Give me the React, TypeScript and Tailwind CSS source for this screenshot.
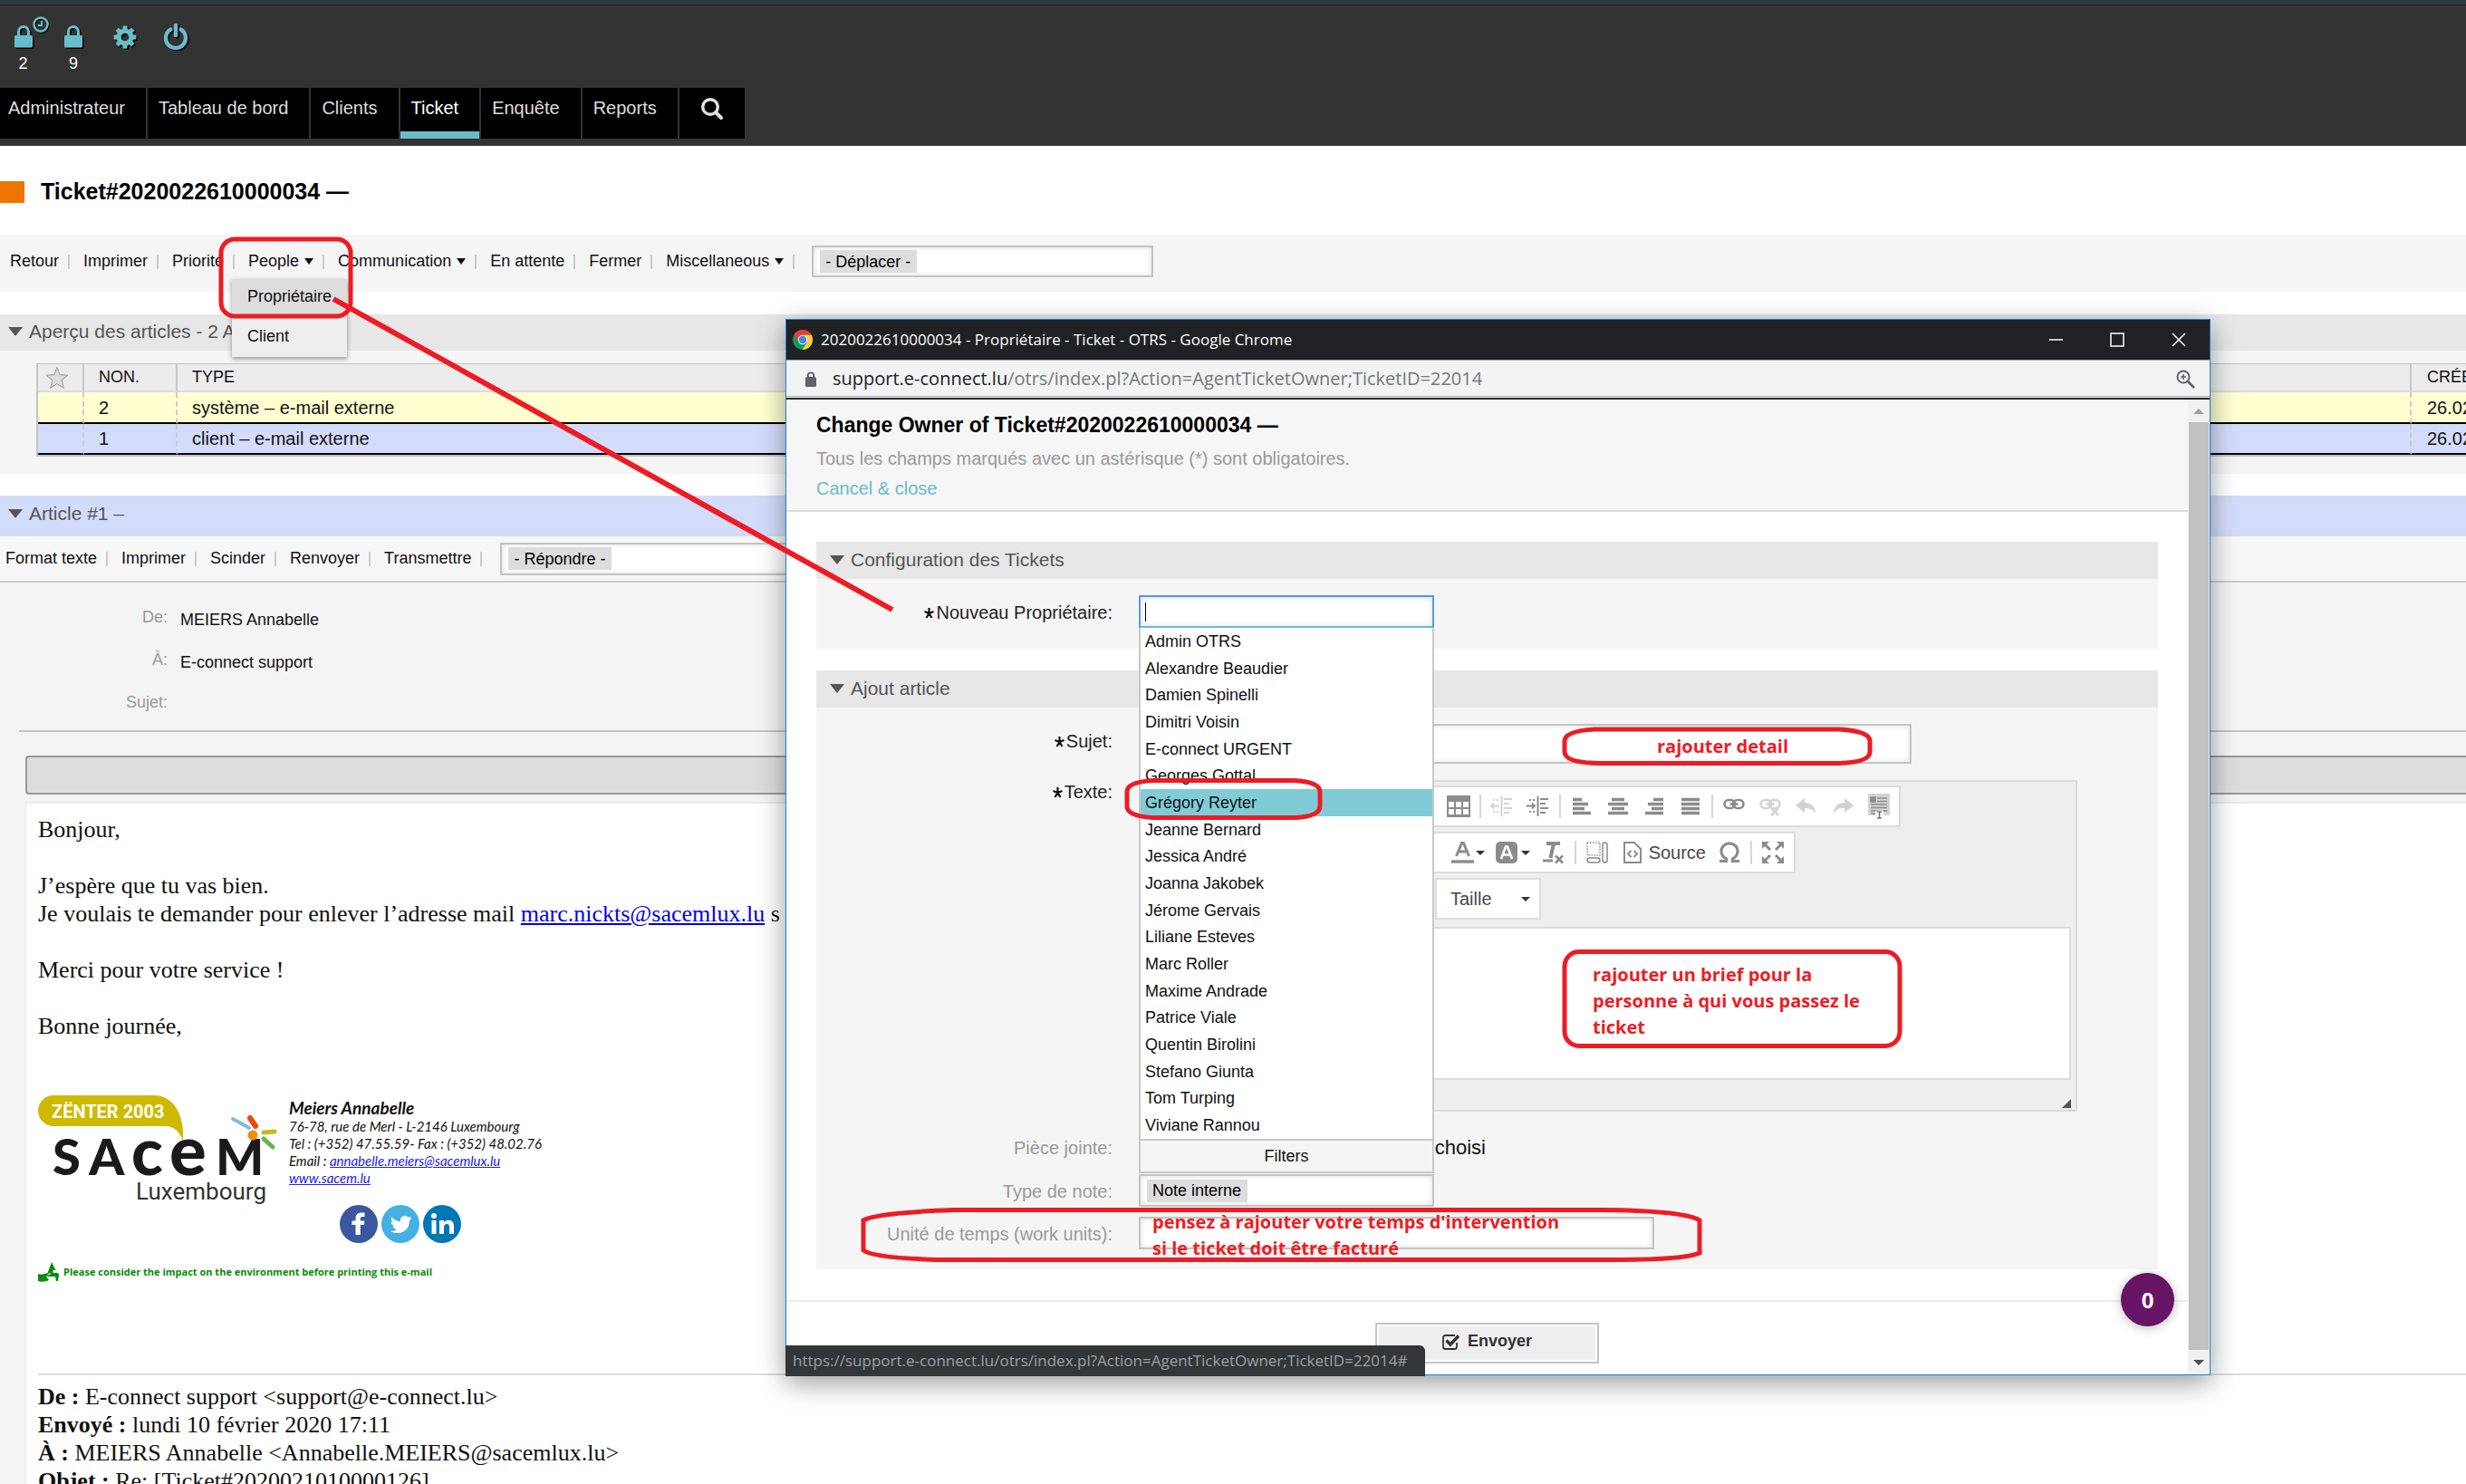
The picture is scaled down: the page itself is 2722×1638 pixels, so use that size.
import React from "react";

const ARIAL = "font-['Liberation_Sans',Arial,sans-serif]";

function LockIcon() {
  return (
    <svg width="20" height="26" viewBox="0 0 20 26" className="overflow-visible" aria-hidden="true">
      <g transform="translate(1.5 1.5)" fill="#000" stroke="#000">
        <path d="M4.5 12V7a5.5 5.5 0 0 1 11 0v5" fill="none" strokeWidth="3" />
        <rect x="0.5" y="11.5" width="19" height="12.5" rx="1" />
      </g>
      <path d="M4.5 12V7a5.5 5.5 0 0 1 11 0v5" fill="none" stroke="#69bdca" strokeWidth="3" />
      <rect y="11" width="20" height="13.5" rx="1.5" fill="#69bdca" />
    </svg>
  );
}

function ClockIcon() {
  return (
    <svg width="20" height="20" viewBox="0 0 20 20" aria-hidden="true">
      <circle cx="10" cy="10" r="7.5" fill="none" stroke="#000" strokeWidth="2.5" />
      <circle cx="9" cy="9" r="7.5" fill="none" stroke="#69bdca" strokeWidth="2.4" />
      <path d="M10 5v5H6" fill="none" stroke="#69bdca" strokeWidth="1.8" />
    </svg>
  );
}

const TEETH = [0, 45, 90, 135, 180, 225, 270, 315];

function Gear({ color }: { color: string }) {
  return (
    <g>
      {TEETH.map((a) => (
        <path key={a} d="M10 5.5 10.8 0.6h4.4L16 5.5z" fill={color} transform={"rotate(" + a + " 13 13)"} />
      ))}
      <circle cx="13" cy="13" r="6.8" fill="none" stroke={color} strokeWidth="5" />
    </g>
  );
}

function GearIcon() {
  return (
    <svg width="28" height="28" viewBox="0 0 28 28" aria-hidden="true">
      <g transform="translate(1.5 1.5)">
        <Gear color="#000" />
      </g>
      <Gear color="#69bdca" />
    </svg>
  );
}

function PowerIcon() {
  const d = "M7.2 6.6A11 11 0 1 0 18.8 6.6M13 2v11";
  return (
    <svg width="28" height="30" viewBox="0 0 28 30" fill="none" strokeWidth="4.4" strokeLinecap="round" aria-hidden="true">
      <path d={d} stroke="#000" transform="translate(1.5 1.5)" />
      <path d={d} stroke="#69bdca" />
    </svg>
  );
}

function Triangle({ className }: { className: string }) {
  return (
    <svg className={className} viewBox="0 0 16 10" preserveAspectRatio="none" aria-hidden="true">
      <path d="M0 0h16L8 10z" fill="currentColor" />
    </svg>
  );
}

function Sep() {
  return <span className="ml-2.5 mr-[15px] h-4 w-0.5 bg-[#ccc]" />;
}

function ActionItem({ label, menu, children }: { label: string; menu?: boolean; children?: React.ReactNode }) {
  return (
    <li className="relative flex h-full items-center">
      <a href="#" className="flex items-center gap-1.5 whitespace-nowrap">
        {label}
        {menu && <Triangle className="h-[7px] w-2.5" />}
      </a>
      <Sep />
      {children}
    </li>
  );
}

function ChipSelect({ label, text, className }: { label: string; text: string; className: string }) {
  return (
    <div className={"flex items-center border-2 border-[#c4c4c4] bg-white pl-[7px] shadow-[inset_0_0_6px_#ddd] " + className}>
      <select aria-label={label} className="h-[25px] appearance-none bg-[#ddd] px-1.5 text-[18px] leading-6 text-black">
        <option>{text}</option>
      </select>
    </div>
  );
}

function NavItem({ label, active, first }: { label: string; active?: boolean; first?: boolean }) {
  return (
    <li>
      <a
        href="#"
        className={
          "block h-14 whitespace-nowrap bg-black pr-[23px] leading-[44px] " +
          (first ? "pl-[9px] " : "pl-3 ") +
          (active ? "border-b-8 border-[#69bdca] text-white" : "text-[#ddd]")
        }
      >
        {label}
      </a>
    </li>
  );
}

function PageHeader() {
  return (
    <header className="shrink-0 bg-[#333] pb-2">
      <div className="h-1.5 border-b border-[#222] bg-[#30363b]" />
      <ul className="flex h-[91px] pt-[22px] text-center text-[18px] leading-[28px] text-white">
        <li className="relative w-[51px]">
          <a href="#" aria-label="Tickets verrouillés en rappel">
            <span className="flex h-7 justify-center"><LockIcon /></span>2
            <span className="absolute -top-2.5 left-9"><ClockIcon /></span>
          </a>
        </li>
        <li className="w-[60px]">
          <a href="#" aria-label="Tickets verrouillés">
            <span className="flex h-7 justify-center"><LockIcon /></span>9
          </a>
        </li>
        <li className="flex w-[55px] justify-center">
          <a href="#" aria-label="Préférences"><GearIcon /></a>
        </li>
        <li className="flex w-[58px] justify-center">
          <a href="#" aria-label="Déconnexion" className="-mt-0.5"><PowerIcon /></a>
        </li>
      </ul>
      <nav>
        <ul className="flex gap-0.5 text-[20px]">
          <NavItem label="Administrateur" first />
          <NavItem label="Tableau de bord" />
          <NavItem label="Clients" />
          <NavItem label="Ticket" active />
          <NavItem label="Enquête" />
          <NavItem label="Reports" />
          <li>
            <button aria-label="Rechercher" className="flex h-14 w-[72px] items-start justify-center bg-black pt-2.5">
              <svg width="26" height="26" viewBox="0 0 26 26" fill="none" stroke="#e2e2e2" strokeLinecap="round" aria-hidden="true">
                <circle cx="11" cy="11" r="8.3" strokeWidth="3.4" />
                <path d="M17.5 17.5l5.5 5.5" strokeWidth="4" />
              </svg>
            </button>
          </li>
        </ul>
      </nav>
    </header>
  );
}

function TicketActions() {
  return (
    <div className="flex h-[63px] shrink-0 items-center bg-[#f5f5f5] pb-1 pl-[11px] text-[18px] text-[#111]">
      <ul className="flex h-full items-center">
        <ActionItem label="Retour" />
        <ActionItem label="Imprimer" />
        <ActionItem label="Priorité" />
        <ActionItem label="People" menu>
          <ul className="absolute -left-[18px] top-[49px] z-10 w-[127px] bg-[#eee] shadow-[0_2px_5px_rgba(0,0,0,0.4)]">
            <li className="h-11 bg-[#ddd] pl-[17px] leading-[38px]"><a href="#">Propriétaire</a></li>
            <li className="h-[42px] pl-[17px] leading-[38px]"><a href="#">Client</a></li>
          </ul>
        </ActionItem>
        <ActionItem label="Communication" menu />
        <ActionItem label="En attente" />
        <ActionItem label="Fermer" />
        <ActionItem label="Miscellaneous" menu />
      </ul>
      <ChipSelect label="Déplacer" text="- Déplacer -" className="ml-1 h-[35px] w-[377px]" />
    </div>
  );
}

const ROWS = [
  { n: "2", type: "système – e-mail externe", date: "26.02.2020", css: "h-[35px] bg-[#ffffd1]" },
  { n: "1", type: "client – e-mail externe", date: "26.02.2020", css: "h-[34px] bg-[#d4dcfb]" },
];

function ArticleTable() {
  return (
    <table className="w-full table-fixed border-separate border-spacing-0 border-b-2 border-l-2 border-[#c4c4c4] text-left">
      <colgroup>
        <col className="w-[51px]" />
        <col className="w-[103px]" />
        <col />
        <col className="w-[60px]" />
      </colgroup>
      <thead>
        <tr className="h-8 bg-[#ececec] text-[18px] text-[#111]">
          <th className="border-b-2 border-r-2 border-t border-b-[#ddd] border-r-[#c8c8c8] border-t-[#c4c4c4] p-0">
            <svg className="ml-2" width="26" height="26" viewBox="0 0 26 26" aria-label="Important">
              <path d="M13 1.5l3.2 8.2 8.6.5-6.7 5.5 2.2 8.6L13 19.5l-7.3 4.800 2.200-8.600L1.200 10.200l8.600-.5z" fill="#ddd" stroke="#999" />
            </svg>
          </th>
          <th className="border-b-2 border-r-2 border-t border-b-[#ddd] border-r-[#c8c8c8] border-t-[#c4c4c4] p-0 pl-4 font-normal">NON.</th>
          <th className="border-b-2 border-r-2 border-t border-b-[#ddd] border-r-[#c8c8c8] border-t-[#c4c4c4] p-0 pl-4 font-normal">TYPE</th>
          <th className="overflow-hidden whitespace-nowrap border-b-2 border-t border-b-[#ddd] border-t-[#c4c4c4] p-0 pl-[17px] font-normal">CRÉE</th>
        </tr>
      </thead>
      <tbody className="text-[20px] text-[#111]">
        {ROWS.map((r) => (
          <tr key={r.n} className={r.css}>
            <td className="border-r-2 border-dashed border-r-[#ccc] [border-bottom:2px_solid_#000] p-0" />
            <td className="border-r-2 border-dashed border-r-[#ccc] [border-bottom:2px_solid_#000] p-0 pl-4">{r.n}</td>
            <td className="border-r-2 border-dashed border-r-[#ccc] [border-bottom:2px_solid_#000] p-0 pl-4">{r.type}</td>
            <td className="overflow-hidden whitespace-nowrap [border-bottom:2px_solid_#000] p-0 pl-[17px]">{r.date}</td>
          </tr>
        ))}
      </tbody>
    </table>
  );
}

function SacemLogo() {
  return (
    <svg width="264" height="130" viewBox="0 0 264 130" role="img" aria-label="Sacem Luxembourg">
      <path d="M17 0H128C150 0 160 22 160 42V51C157 41 151 34 140 34H17A17 17 0 0 1 17 0z" fill="#cdb900" />
      <text x="15" y="25" fontSize="20" fontWeight="700" fill="#fff" fontFamily="Roboto, sans-serif">ZËNTER 2003</text>
      <text y="88" fill="#1a1a1a" fontFamily="Lato, sans-serif" fontWeight="900" fontSize="56">
        <tspan x="16">S</tspan>
        <tspan x="56">A</tspan>
        <tspan x="103" fontSize="72">c</tspan>
        <tspan x="145" fontSize="76">e</tspan>
        <tspan x="196">M</tspan>
      </text>
      <text x="252" y="115" fontSize="26" textAnchor="end" fill="#333" fontFamily="Roboto, sans-serif">Luxembourg</text>
      <g strokeLinecap="round" fill="none">
        <path d="M215 26l18 10" stroke="#7dbbe6" strokeWidth="4" />
        <path d="M234 25l6 9" stroke="#e8490f" strokeWidth="6" />
        <path d="M249 41l12-1" stroke="#c9b81b" strokeWidth="5" />
        <path d="M249 48l10 9" stroke="#6ab44c" strokeWidth="5" />
      </g>
      <circle cx="237" cy="44" r="5.500" fill="#f28c00" />
    </svg>
  );
}

function SocialIcons() {
  return (
    <div className="mt-[20px] flex gap-1 pl-[56px]">
      <svg width="42" height="42" viewBox="0 0 42 42" role="img" aria-label="Facebook">
        <circle cx="21" cy="21" r="21" fill="#3b579d" />
        <path d="M17.500 33V22h-4v-4.500h4V15c0-4.500 2.500-6.500 6-6.500h4V13h-2.500c-1.700 0-2.200.8-2.200 2.200v2.300h4.600L26.800 22h-4v11z" fill="#fff" />
      </svg>
      <svg width="42" height="42" viewBox="0 0 42 42" role="img" aria-label="Twitter">
        <circle cx="21" cy="21" r="21" fill="#44b0e3" />
        <path d="M11 13c3 3.500 6 5 10 5.200-.6-4 2-6.200 4.800-6.200 1.600 0 3 .6 3.900 1.600 1.300-.2 2.500-.7 3.300-1.200-.4 1.300-1.200 2.200-2.200 2.900l2.700-.6c-.6 1-1.500 1.900-2.500 2.600C31 26 25 31 18 31c-3.200 0-6-.8-8-2.200 2.800.3 5.300-.4 7.200-1.900-2.300-.1-4-1.600-4.600-3.500h2.100c-2.500-.7-4-2.700-4-5l2.200.6c-2-1.500-2.700-3.900-1.900-6z" fill="#fff" />
      </svg>
      <svg width="42" height="42" viewBox="0 0 42 42" role="img" aria-label="LinkedIn">
        <circle cx="21" cy="21" r="21" fill="#0077b5" />
        <g fill="#fff">
          <circle cx="12" cy="12" r="3" />
          <path d="M9.500 17h5v15h-5zM18 17h5v2.200c1-1.600 2.700-2.500 5-2.500 4.500 0 6 3 6 7V32h-5v-7.500c0-2-.6-3.600-2.600-3.600-2.200 0-3.400 1.500-3.400 3.800V32h-5z" />
        </g>
      </svg>
    </div>
  );
}

function MailBody() {
  return (
    <div className="ml-7 mt-2 flex-1 border-l border-t-2 border-[#ebebeb] bg-white pl-[13px] pt-[13px] font-['Liberation_Serif','Times_New_Roman',serif] text-[26px] leading-[31px] text-[#111]">
      <p className="mb-[31px]">Bonjour,</p>
      <p>J’espère que tu vas bien.</p>
      <p className="mb-[31px] whitespace-nowrap">
        Je voulais te demander pour enlever l’adresse mail{" "}
        <a href="#" className="text-[#0000ee] underline">marc.nickts@sacemlux.lu</a> s
      </p>
      <p className="mb-[31px]">Merci pour votre service !</p>
      <p>Bonne journée,</p>
      <div className="mt-[61px] flex h-[164px] gap-[13px]">
        <SacemLogo />
        <address className="whitespace-nowrap pt-0.5 font-[Lato,sans-serif] text-[15px] italic leading-[19px]">
          <strong className="block text-[19px] leading-[23px]">Meiers Annabelle</strong>
          76-78, rue de Merl - L-2146 Luxembourg
          <br />
          Tel : (+352) 47.55.59- Fax : (+352) 48.02.76
          <br />
          Email : <a href="#" className="text-[#2222ee] underline">annabelle.meiers@sacemlux.lu</a>
          <br />
          <a href="#" className="text-[#2222ee] underline">www.sacem.lu</a>
          <SocialIcons />
        </address>
      </div>
      <div className="mt-5 flex h-[22px] items-center gap-1">
        <svg width="24" height="22" viewBox="0 0 24 22" fill="#0a8a0a" aria-hidden="true">
          <path d="M15 0l4.500 9h-3v3H22l1 2-1 7h-2l-1-5H9l3-2h1.500v-2h-3z" />
          <path d="M0 13c4 2 8-1 13-1l-4 4 3 4c-4 2-9 2-12 1z" />
        </svg>
        <span className="font-['Open_Sans',sans-serif] text-[11px] font-bold leading-5 text-[#0a8a0a]">
          Please consider the impact on the environment before printing this e-mail
        </span>
      </div>
      <hr className="mt-[101px] border-t-2 border-[#ddd]" />
      <div className="whitespace-nowrap pt-2">
        <p><b>De :</b> E-connect support &lt;support@e-connect.lu&gt;</p>
        <p><b>Envoyé :</b> lundi 10 février 2020 17:11</p>
        <p><b>À :</b> MEIERS Annabelle &lt;Annabelle.MEIERS@sacemlux.lu&gt;</p>
        <p><b>Objet :</b> Re: [Ticket#2020021010000126]</p>
      </div>
    </div>
  );
}

function Detail({ label, value }: { label: string; value?: string }) {
  return (
    <div className="flex h-[47px] items-center text-[18px]">
      <dt className="w-[185px] text-right text-[#999]">{label}</dt>
      <dd className="ml-3.5 pt-1.5 text-[#111]">{value}</dd>
    </div>
  );
}

function ArticleView() {
  return (
    <section className="mt-6 flex flex-1 flex-col bg-[#f4f4f4]">
      <h2 className="flex h-[45px] shrink-0 items-center gap-[7px] bg-[#d4dcfb] pb-[5px] pl-[9px] text-[21px] text-[#555]">
        <Triangle className="h-2.5 w-4" />
        Article #1 –
      </h2>
      <div className="flex h-[51px] shrink-0 items-center border-b-2 border-[#ccc] bg-[#f7f7f7] pl-1.5 text-[18px] text-[#111]">
        <ul className="flex h-full items-center">
          <ActionItem label="Format texte" />
          <ActionItem label="Imprimer" />
          <ActionItem label="Scinder" />
          <ActionItem label="Renvoyer" />
          <ActionItem label="Transmettre" />
        </ul>
        <ChipSelect label="Répondre" text="- Répondre -" className="ml-[5px] h-9 w-[377px]" />
      </div>
      <dl className="pb-[7px] pt-[15px]">
        <Detail label="De:" value="MEIERS Annabelle" />
        <Detail label="À:" value="E-connect support" />
        <Detail label="Sujet:" />
      </dl>
      <hr className="ml-[21px] border-t-2 border-[#c4c4c4]" />
      <div className="ml-7 mt-[26px] h-[43px] shrink-0 rounded-l-sm border-2 border-r-0 border-[#999] bg-[#ddd]" />
      <MailBody />
    </section>
  );
}

/* ---------- Popup window ---------- */

const OWNERS = [
  "Admin OTRS",
  "Alexandre Beaudier",
  "Damien Spinelli",
  "Dimitri Voisin",
  "E-connect URGENT",
  "Georges Gottal",
  "Grégory Reyter",
  "Jeanne Bernard",
  "Jessica André",
  "Joanna Jakobek",
  "Jérome Gervais",
  "Liliane Esteves",
  "Marc Roller",
  "Maxime Andrade",
  "Patrice Viale",
  "Quentin Birolini",
  "Stefano Giunta",
  "Tom Turping",
  "Viviane Rannou",
];

function OwnerField() {
  return (
    <div className="relative w-[326px] self-start">
      <input
        id="owner"
        className="block h-9 w-full border-2 border-b-[#69bdca] border-l-[#5a9cf0] border-r-[#5a9cf0] border-t-[#4d90fe] bg-white shadow-[inset_0_0_6px_#ddd] outline-none"
      />
      <span className="absolute left-[7px] top-2 h-[21px] w-px bg-black" />
      <div className="absolute left-0 top-full z-20 w-full">
        <ul role="listbox" aria-label="Propriétaires" className="grid h-[564px] auto-rows-fr border-x-2 border-[#c8c8c8] bg-white text-[18px] text-[#111]">
          {OWNERS.map((o) => (
            <li
              key={o}
              role="option"
              aria-selected={o === "Grégory Reyter"}
              className={"flex items-center pl-[5px] leading-6 " + (o === "Grégory Reyter" ? "bg-[#80ccd6]" : "")}
            >
              {o}
            </li>
          ))}
        </ul>
        <button className="block h-[38px] w-full border-2 border-[#c8c8c8] bg-[#f5f5f5] text-center text-[18px] text-[#111]">Filters</button>
      </div>
    </div>
  );
}

function ToolButton({ label, children }: { label: string; children: React.ReactNode }) {
  return (
    <button aria-label={label} className="flex h-full w-10 items-center justify-center">
      {children}
    </button>
  );
}

function ToolSep() {
  return <span className="mx-[3px] h-[26px] w-0.5 shrink-0 bg-[#d6d6d6]" />;
}

function AlignIcon({ d }: { d: string }) {
  return (
    <svg width="22" height="20" viewBox="0 0 22 20" stroke="#8c8c8c" strokeWidth="3.4" aria-hidden="true">
      <path d={d} />
    </svg>
  );
}

function IndentIcon({ faded, flip }: { faded?: boolean; flip?: boolean }) {
  return (
    <svg width="26" height="24" viewBox="0 0 26 24" fill="none" stroke={faded ? "#d4d4d4" : "#8c8c8c"} strokeWidth="2" aria-hidden="true">
      <path d="M12.500 1v22M15 4h9M15 9h6M15 14h9M15 19h6" />
      <path d="M3 5h7M3 18h7" strokeDasharray="2 2" />
      <path d={flip ? "M0 11.500h8M6 8.500l3 3-3 3" : "M10 11.500H2M4 8.500l-3 3 3 3"} />
    </svg>
  );
}

function LinkIcon({ faded }: { faded?: boolean }) {
  return (
    <svg width="26" height="24" viewBox="0 0 26 24" fill="none" stroke={faded ? "#d4d4d4" : "#8c8c8c"} strokeWidth="2.600" aria-hidden="true">
      <rect x="2.500" y="5" width="11.500" height="9" rx="4.500" />
      <rect x="12" y="5" width="11.500" height="9" rx="4.500" />
      <path d="M8.500 9.500h9" />
      {faded && <path d="M14 14l8 8M22 14l-8 8" />}
    </svg>
  );
}

function CurveArrow({ right }: { right?: boolean }) {
  return (
    <svg width="24" height="18" viewBox="0 0 24 18" aria-hidden="true">
      <path
        d="M0 8L10 0v5c7 0 11 4 12.500 12C19.500 13 16 11 10 11v5z"
        fill="#d2d2d2"
        transform={right ? "translate(24 0) scale(-1 1)" : undefined}
      />
    </svg>
  );
}

function Caret() {
  return <Triangle className="h-[5px] w-2.5 text-[#333]" />;
}

function Editor() {
  return (
    <div className="flex h-[366px] w-[1036px] flex-col border-2 border-[#dcdcdc] bg-[#eee] px-[5px] pt-1">
      <div className="flex h-[46px] w-[834px] items-center justify-end border-2 border-[#dcdcdc] bg-white pr-0.5">
        <ToolButton label="Tableau">
          <svg width="26" height="24" viewBox="0 0 26 24" aria-hidden="true">
            <path d="M0 0h26v24H0z" fill="#8c8c8c" />
            <path d="M2 7h6v6H2zM10 7h6v6h-6zM18 7h6v6h-6zM2 15h6v6H2zM10 15h6v6h-6zM18 15h6v6h-6z" fill="#fff" />
          </svg>
        </ToolButton>
        <ToolSep />
        <ToolButton label="Diminuer le retrait"><IndentIcon faded /></ToolButton>
        <ToolButton label="Augmenter le retrait"><IndentIcon flip /></ToolButton>
        <ToolSep />
        <ToolButton label="Aligner à gauche"><AlignIcon d="M1 2.500h10M1 7.500h17M1 12.500h13M1 17.500h20" /></ToolButton>
        <ToolButton label="Centrer"><AlignIcon d="M4 2.500h14M0 7.500h22M4 12.500h14M0 17.500h22" /></ToolButton>
        <ToolButton label="Aligner à droite"><AlignIcon d="M10 2.500h11M4 7.500h17M8 12.500h13M1 17.500h20" /></ToolButton>
        <ToolButton label="Justifier"><AlignIcon d="M1 2.500h20M1 7.500h20M1 12.500h20M1 17.500h20" /></ToolButton>
        <ToolSep />
        <ToolButton label="Lien"><LinkIcon /></ToolButton>
        <ToolButton label="Supprimer le lien"><LinkIcon faded /></ToolButton>
        <ToolButton label="Annuler"><CurveArrow /></ToolButton>
        <ToolButton label="Rétablir"><CurveArrow right /></ToolButton>
        <ToolButton label="Scinder la citation">
          <svg width="26" height="28" viewBox="0 0 26 28" aria-hidden="true">
            <path d="M1 0h24v24H1z" fill="#d4d4d4" />
            <path d="M4 4h5v5H4zM11 5h11M11 8.500h11M4 12h18M4 15.500h18M4 19h8M17 19h5M4 22h6" stroke="#8c8c8c" strokeWidth="1.600" fill="#8c8c8c" />
            <path d="M9 19h9v9H9z" fill="#fff" />
            <path d="M11 20h5M11 27h5M13.500 20v7" stroke="#777" strokeWidth="1.600" />
          </svg>
        </ToolButton>
      </div>
      <div className="mt-[5px] flex h-[46px] w-[718px] items-center justify-end border-2 border-[#dcdcdc] bg-white pr-[3px]">
        <button aria-label="Couleur du texte" className="flex w-[50px] items-center justify-center gap-0.5">
          <svg width="25" height="24" viewBox="0 0 25 24" fill="none" stroke="#8c8c8c" aria-hidden="true">
            <path d="M5.500 16L11.500 1.500h2L19.500 16M8 11h9" strokeWidth="3" />
            <path d="M0 22h25" strokeWidth="3.400" />
          </svg>
          <Caret />
        </button>
        <button aria-label="Couleur d'arrière-plan" className="flex w-[50px] items-center justify-center gap-1">
          <svg width="24" height="24" viewBox="0 0 24 24" fill="none" aria-hidden="true">
            <rect width="24" height="24" rx="5" fill="#8c8c8c" />
            <path d="M6 19L11 5.500h2L18 19M8 14.500h8" stroke="#fff" strokeWidth="2.600" />
          </svg>
          <Caret />
        </button>
        <ToolButton label="Supprimer la mise en forme">
          <svg width="24" height="26" viewBox="0 0 24 26" fill="none" stroke="#8c8c8c" aria-hidden="true">
            <path d="M4 3h15M12 3L8.500 19" strokeWidth="4" />
            <path d="M0 22h11" strokeWidth="3" />
            <path d="M14 16.500l8 8M22 16.500l-8 8" strokeWidth="2.600" />
          </svg>
        </ToolButton>
        <ToolSep />
        <ToolButton label="Afficher les blocs">
          <svg width="24" height="24" viewBox="0 0 24 24" fill="none" stroke="#8c8c8c" strokeWidth="1.500" aria-hidden="true">
            <path d="M1 1h14v14H1z" strokeDasharray="1.500 1.500" />
            <rect x="18" y="1" width="5" height="22" rx="2.500" />
            <rect x="1" y="18" width="14" height="5" rx="2.500" />
          </svg>
        </ToolButton>
        <button className="flex w-[106px] items-center justify-end gap-2 pr-1.5 text-[20px] text-[#484848]">
          <svg width="20" height="24" viewBox="0 0 20 24" fill="none" stroke="#8c8c8c" strokeWidth="2" aria-hidden="true">
            <path d="M1 1h11l7 7v15H1z" />
            <path d="M8.500 10L5 13.500 8.500 17M11.500 10l3.500 3.500-3.500 3.500" />
          </svg>
          Source
        </button>
        <ToolButton label="Caractère spécial">
          <svg width="24" height="24" viewBox="0 0 24 24" fill="none" stroke="#8c8c8c" strokeWidth="3.200" aria-hidden="true">
            <path d="M1 21.500h7.500v-2.500C5 17 3 14 3 10.500a9 8.700 0 0 1 18 0c0 3.500-2 6.500-5.500 8.500v2.500H23" />
          </svg>
        </ToolButton>
        <ToolSep />
        <ToolButton label="Agrandir">
          <svg width="24" height="24" viewBox="0 0 24 24" fill="#8c8c8c" stroke="#8c8c8c" strokeWidth="3" aria-hidden="true">
            <path d="M2 2l7 7M22 2l-7 7M2 22l7-7M22 22l-7-7" />
            <path d="M0 0h8L0 8zM24 0v8l-8-8zM0 24v-8l8 8zM24 24h-8l8-8z" stroke="none" />
          </svg>
        </ToolButton>
      </div>
      <div className="mt-[5px] flex h-[46px] gap-1.5 text-[20px] text-[#484848]">
        <button className="flex w-[314px] items-center justify-between border-2 border-[#dcdcdc] bg-white px-4">Police <Caret /></button>
        <button className="flex w-[117px] items-center justify-between border-2 border-[#dcdcdc] bg-white pl-[15px] pr-2.5">Taille <Caret /></button>
      </div>
      <textarea aria-label="Texte" className="mt-2 block h-[169px] w-full resize-none border-2 border-[#dcdcdc] bg-white outline-none" />
      <svg className="ml-auto mt-[21px]" width="10" height="10" viewBox="0 0 10 10" aria-hidden="true">
        <path d="M10 0v10H0z" fill="#555" />
      </svg>
    </div>
  );
}

function FieldLabel({ id, required, className, children }: { id?: string; required?: boolean; className: string; children: React.ReactNode }) {
  return (
    <label htmlFor={id} className={"mr-[29px] flex w-[327px] justify-end gap-0.5 self-start text-[20px] " + (required ? "text-[#222] " : "text-[#999] ") + className}>
      {required && (
        <svg className="mt-[14px]" width="11" height="12" viewBox="0 0 11 12" stroke="#111" strokeWidth="2.200" aria-hidden="true">
          <path d="M5.500 0v6M5.500 6L0.500 4M5.500 6l5-2M5.500 6l-3 5M5.500 6l3 5" />
        </svg>
      )}
      {children}
    </label>
  );
}

function WidgetTitle({ children }: { children: React.ReactNode }) {
  return (
    <h2 className="flex h-[41px] items-center gap-[7px] bg-[#e7e7e7] pb-px pl-[15px] text-[21px] text-[#555]">
      <Triangle className="h-2.5 w-4" />
      {children}
    </h2>
  );
}

const INPUT = "border-2 border-[#c4c4c4] bg-white shadow-[inset_0_0_6px_#ddd] outline-none";

function PopupForm() {
  return (
    <main className="min-w-0 flex-1 bg-white">
      <header className="h-[124px] border-b-2 border-[#ddd] bg-[#f6f6f6] pl-[33px] pt-3 text-[20px] leading-[33px]">
        <h1 className="text-[23px] font-bold text-black">Change Owner of Ticket#2020022610000034 —</h1>
        <p className="pt-1 text-[#999]">Tous les champs marqués avec un astérisque (*) sont obligatoires.</p>
        <a href="#" className="block text-[#69bdca]">Cancel &amp; close</a>
      </header>
      <section className="ml-[33px] mr-[33px] mt-[33px] bg-[#f5f5f5]">
        <WidgetTitle>Configuration des Tickets</WidgetTitle>
        <div className="flex h-[77px] pt-[18px]">
          <FieldLabel id="owner" required className="leading-[38px]">Nouveau Propriétaire:</FieldLabel>
          <OwnerField />
        </div>
      </section>
      <section className="ml-[33px] mr-[33px] mt-6 bg-[#f5f5f5] pb-5">
        <WidgetTitle>Ajout article</WidgetTitle>
        <div className="flex pt-[18px]">
          <FieldLabel id="subject" required className="leading-[38px]">Sujet:</FieldLabel>
          <input id="subject" className={"h-11 w-[853px] " + INPUT} />
        </div>
        <div className="flex pt-[18px]">
          <FieldLabel required className="-mt-1.5 leading-[38px]">Texte:</FieldLabel>
          <Editor />
        </div>
        <div className="flex pt-[22px]">
          <FieldLabel className="leading-9">Pièce jointe:</FieldLabel>
          <span className="w-[383px] text-right text-[22px] leading-9 text-[#111]">Aucun fichier choisi</span>
        </div>
        <div className="flex pt-[11px]">
          <FieldLabel className="leading-[38px]">Type de note:</FieldLabel>
          <ChipSelect label="Type de note" text="Note interne" className="h-9 w-[326px]" />
        </div>
        <div className="-mt-0.5 flex pt-[11px]">
          <FieldLabel id="units" className="leading-[38px]">Unité de temps (work units):</FieldLabel>
          <input id="units" className={"h-9 w-[569px] " + INPUT} />
        </div>
      </section>
      <footer className="mt-[34px] border-t-2 border-[#eee] pt-[23px]">
        <button className="mx-auto flex h-[45px] w-[247px] items-center justify-center gap-2 border-2 border-[#c4c4c4] bg-[#eee] pb-1 text-[18px] font-bold text-[#333] shadow-[inset_0_0_0_2px_#fff]">
          <svg width="20" height="18" viewBox="0 0 20 18" fill="none" stroke="#333" aria-hidden="true">
            <path d="M16 10v4.500a2.500 2.500 0 0 1-2.500 2.500h-10A2.500 2.500 0 0 1 1 14.500v-10A2.500 2.500 0 0 1 3.500 2H14" strokeWidth="1.800" />
            <path d="M4.500 7.500L9 12l9-9.500" strokeWidth="3.400" />
          </svg>
          Envoyer
        </button>
      </footer>
    </main>
  );
}

function ChromeLogo() {
  return (
    <svg width="22" height="22" viewBox="0 0 22 22" aria-hidden="true">
      <path d="M11 11L1.500 5.500A11 11 0 0 1 20.500 5.500z" fill="#db4437" />
      <path d="M1.500 5.500A11 11 0 0 0 11 22l5-8.500L11 11z" fill="#0f9d58" />
      <path d="M20.500 5.500A11 11 0 0 1 10.500 22L16 13.500 11 5.500z" fill="#ffcd40" />
      <path d="M11 5.500h9.500A11 11 0 0 0 1.500 5.500L6 13z" fill="#db4437" />
      <circle cx="11" cy="11" r="5.200" fill="#f1f1f1" />
      <circle cx="11" cy="11" r="4.200" fill="#4285f4" />
    </svg>
  );
}

function PopupWindow() {
  return (
    <div role="dialog" aria-label="Propriétaire" className="absolute left-[867px] top-[352px] flex h-[1166px] w-[1573px] flex-col border border-[#1883d7] shadow-[0_8px_28px_rgba(0,0,0,0.4)]">
      <div className="flex h-11 items-center bg-[#202124] pl-[7px] font-['Open_Sans',sans-serif] text-[17px] text-white">
        <ChromeLogo />
        <span className="ml-[9px]">2020022610000034 - Propriétaire - Ticket - OTRS - Google Chrome</span>
        <div className="ml-auto flex">
          <button aria-label="Réduire" className="flex h-11 w-[68px] items-center justify-center">
            <svg width="15" height="15" stroke="#fff" fill="none" strokeWidth="1.500"><path d="M0 7h15" /></svg>
          </button>
          <button aria-label="Agrandir" className="flex h-11 w-[68px] items-center justify-center">
            <svg width="16" height="16" stroke="#fff" fill="none" strokeWidth="1.500"><path d="M1 1h14v14H1z" /></svg>
          </button>
          <button aria-label="Fermer" className="flex h-11 w-[68px] items-center justify-center">
            <svg width="16" height="16" stroke="#fff" fill="none" strokeWidth="1.500"><path d="M1 1l14 14M15 1L1 15" /></svg>
          </button>
        </div>
      </div>
      <div className="border-b border-[#aaa] bg-[#f1f3f4]">
        <div className="flex h-10 items-center border-t border-[#aaa] pl-[21px] pr-4 pt-0.5 font-['Open_Sans',sans-serif] text-[20px] text-[#777]">
          <svg width="12" height="17" viewBox="0 0 12 17" aria-hidden="true">
            <path d="M2.800 7V4.500a3.200 3.200 0 0 1 6.400 0V7" fill="none" stroke="#5f6368" strokeWidth="1.800" />
            <rect y="6" width="12" height="11" rx="1.500" fill="#5f6368" />
          </svg>
          <span className="ml-[18px] pb-0.5">
            <span className="text-[#202124]">support.e-connect.lu</span>/otrs/index.pl?Action=AgentTicketOwner;TicketID=22014
          </span>
          <svg className="ml-auto" width="21" height="21" viewBox="0 0 21 21" fill="none" stroke="#5f6368" strokeWidth="2" aria-label="Zoom">
            <circle cx="8" cy="8" r="6.500" />
            <path d="M13 13l7 7" strokeWidth="2.600" />
            <path d="M5 8h6M8 5v6" strokeWidth="1.600" />
          </svg>
        </div>
      </div>
      <div className="border-b-2 border-t border-b-[#202124] border-t-white" />
      <div className="flex min-h-0 flex-1">
        <PopupForm />
        <div className="flex w-6 flex-col items-center bg-[#f1f1f1]">
          <span className="flex h-[25px] items-center"><Triangle className="h-1.5 w-3 rotate-180 text-[#a3a3a3]" /></span>
          <span className="w-[22px] flex-1 bg-[#c1c1c1]" />
          <span className="flex h-[27px] items-center"><Triangle className="h-1.5 w-3 text-[#505050]" /></span>
        </div>
      </div>
      <div className="absolute left-[1473px] top-[1052px] flex size-[59px] items-center justify-center rounded-full bg-[#681466] font-['Open_Sans',sans-serif] text-[24px] font-bold text-white shadow-[0_2px_12px_rgba(0,0,0,0.25)]">0</div>
      <div className="absolute -bottom-0.5 -left-px flex h-[34px] w-[706px] items-center whitespace-nowrap rounded-tr-md bg-[#323639] pl-2 font-['Open_Sans',sans-serif] text-[17px] text-[#9aa0a6]">
        https://support.e-connect.lu/otrs/index.pl?Action=AgentTicketOwner;TicketID=22014#
      </div>
    </div>
  );
}

/* Red pen marks and remarks laid over the windows. */
function Annotations() {
  return (
    <div className="pointer-events-none absolute left-0 top-0 z-30 font-['Open_Sans',sans-serif] text-[20px] font-bold leading-[29px] text-[#ed1c24]">
      <svg width="2722" height="1638" viewBox="0 0 2722 1638" fill="none" stroke="#ed1c24" strokeWidth="5" aria-hidden="true">
        <rect x="244" y="264" width="143" height="85" rx="15" />
        <path d="M368 330L985 673" strokeWidth="6" />
        <path d="M1274 861.500H1428Q1457 863 1457 874V890Q1457 901 1430 902.500H1274Q1244 901 1244 890V874Q1244 863 1274 861.500z" />
        <path d="M1760 805H2030Q2064 807 2064 818V830Q2064 842 2026 842.500H1766Q1727 842 1727 830V818Q1727 807 1760 805z" />
        <rect x="1727" y="1050.500" width="370" height="104" rx="16" />
        <path d="M1052 1335.500H1772Q1860 1337 1876 1347V1383Q1860 1390 1790 1390.500H1034Q962 1388 953 1380V1347Q966 1339 1052 1335.500z" />
      </svg>
      <p className="absolute left-[1829px] top-[809px] whitespace-nowrap">rajouter detail</p>
      <p className="absolute left-[1758px] top-[1061px] whitespace-nowrap">
        rajouter un brief pour la
        <br />
        personne à qui vous passez le
        <br />
        ticket
      </p>
      <p className="absolute left-[1272px] top-[1334px] whitespace-nowrap">
        pensez à rajouter votre temps d'intervention
        <br />
        si le ticket doit être facturé
      </p>
    </div>
  );
}

export default function App() {
  return (
    <div className={"relative flex h-screen flex-col overflow-hidden bg-white " + ARIAL}>
      <PageHeader />
      <div className="flex h-[98px] shrink-0 items-center pt-1">
        <span className="h-6 w-[27px] bg-[#ee7600]" />
        <h1 className="ml-[18px] text-[25px] font-bold text-black">Ticket#2020022610000034 —</h1>
      </div>
      <TicketActions />
      <section className="mt-[25px] shrink-0 bg-[#f5f5f5] pb-[19px]">
        <h2 className="flex h-10 items-center gap-[7px] bg-[#e7e7e7] pb-0.5 pl-[9px] text-[21px] text-[#555]">
          <Triangle className="h-2.5 w-4" />
          Aperçu des articles - 2 Articles
        </h2>
        <div className="pl-10 pt-3.5">
          <ArticleTable />
        </div>
      </section>
      <ArticleView />
      <PopupWindow />
      <Annotations />
    </div>
  );
}
